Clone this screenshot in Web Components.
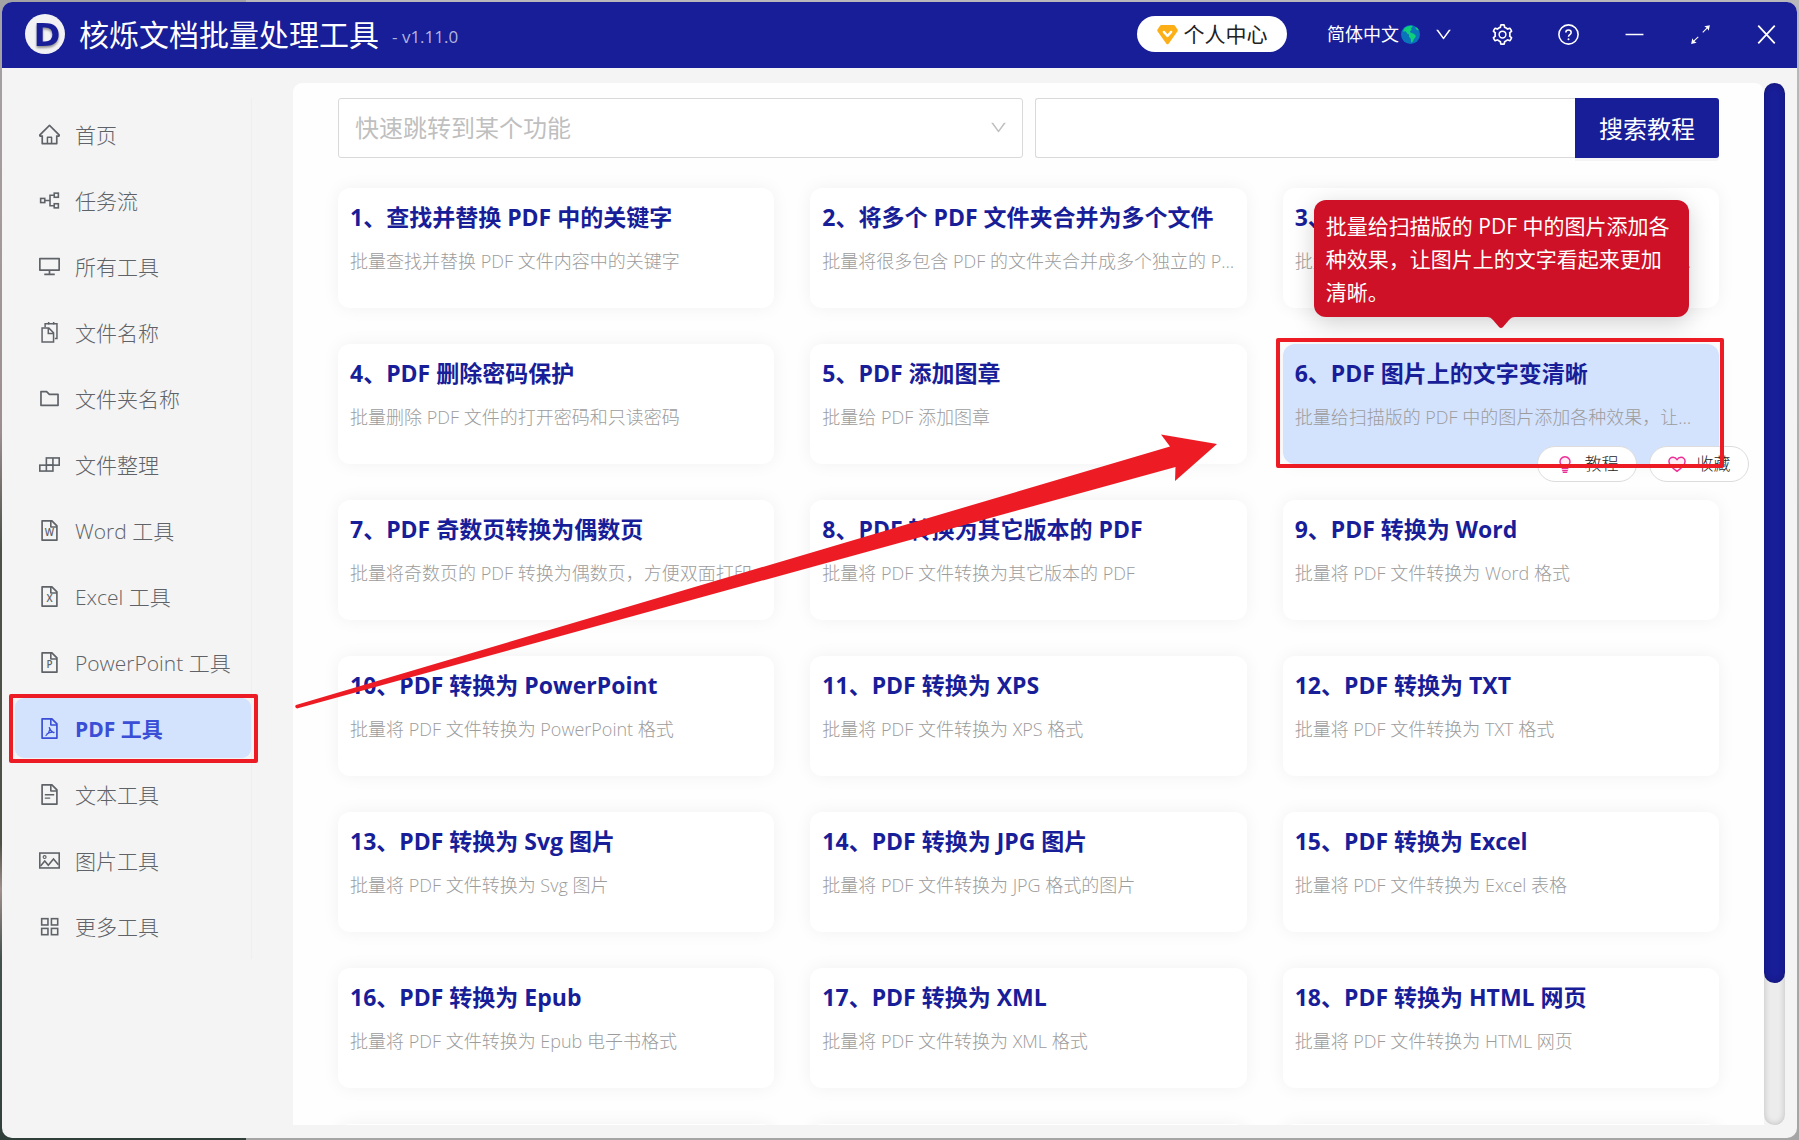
<!DOCTYPE html>
<html lang="zh-CN">
<head>
<meta charset="utf-8">
<title>核烁文档批量处理工具</title>
<style>
  :root {
    --brand: #181d98;
    --surface: #f4f4f4;
    --panel: #fefefe;
    --ink: #5f6368;
    --muted: #9c9c9c;
    --active: #3a4fd6;
    --active-bg: #d3e2fd;
    --mark: #ed1c24;
  }
  html, body { height: 100%; }
  body {
    margin: 0;
    overflow: hidden;
    font-family: "Open Sans", "Noto Sans CJK SC", sans-serif;
    color: var(--ink);
    background:
      linear-gradient(#a3a3a5, #a59a9c 18%, #9c8d90 38%, #4b5147 48%, #4d5045 74%, #a18f8c 78%, #44524e 84%, #2f403b) left / 246px 100% no-repeat,
      linear-gradient(#b9b9bb, #a5a5a5);
  }
</style>
</head>
<body>
<app-window></app-window>

<script>
const FILE = '<path d="M854.6 288.6L639.4 73.4c-6-6-14.1-9.4-22.6-9.4H192c-17.7 0-32 14.3-32 32v832c0 17.7 14.3 32 32 32h640c17.7 0 32-14.3 32-32V311.3c0-8.5-3.4-16.7-9.4-22.7zM790.2 326H602V137.8L790.2 326zm1.8 562H232V136h302v216a42 42 0 0 0 42 42h216v494z"/>';
const letter = c => FILE + `<text x="512" y="760" text-anchor="middle" font-size="420" font-weight="600" font-family="Open Sans, sans-serif">${c}</text>`;
const line = (body, w = 68) => `<g fill="none" stroke="currentColor" stroke-width="${w}">${body}</g>`;

const ICONS = {
  home: '<path d="M946.5 505L534.6 93.4a31.93 31.93 0 0 0-45.2 0L77.5 505c-12 12-18.8 28.3-18.8 45.3 0 35.3 28.7 64 64 64h43.400V908c0 17.700 14.300 32 32 32H825.900c17.700 0 32-14.300 32-32V614.300h43.400c17 0 33.300-6.700 45.300-18.800 24.900-25 24.900-65.500-.1-90.500zM568 868H456V664h112v204zm217.900 0H632V632c0-22.100-17.900-40-40-40H432c-22.100 0-40 17.900-40 40v236H238.100V542.300h-96l370-369.700 370 369.700h-96.200V868z"/>',
  flow: line('<rect x="134" y="424" width="176" height="176"/><rect x="714" y="198" width="176" height="176"/><rect x="714" y="650" width="176" height="176"/><path d="M310 512h190M714 286H534v452h180"/>'),
  desktop: '<path d="M928 140H96c-17.7 0-32 14.3-32 32v496c0 17.7 14.3 32 32 32h380v112H304c-8.8 0-16 7.2-16 16v48c0 4.4 3.6 8 8 8h432c4.4 0 8-3.6 8-8v-48c0-8.800-7.200-16-16-16H548V700h380c17.700 0 32-14.300 32-32V172c0-17.700-14.300-32-32-32zm-40 488H136V212h752v416z"/>',
  copy: line('<path d="M195 325h290l200 200v390H195zM460 325v225h225"/><path d="M325 290V136h505v634h-90M476 64v120M690 64v120"/>', 64),
  folder: '<path d="M880 298.4H521L403.700 186.200a8.150 8.150 0 0 0-5.500-2.200H144c-17.700 0-32 14.300-32 32v592c0 17.700 14.300 32 32 32h736c17.700 0 32-14.300 32-32V330.400c0-17.700-14.300-32-32-32zM840 768H184V256h188.500l119.600 114.400H840V768z"/>',
  blocks: line('<rect x="98" y="540" width="560" height="252"/><rect x="378" y="232" width="548" height="308"/><path d="M378 540v252M658 232v308"/>'),
  word: letter('W'),
  excel: letter('X'),
  ppt: letter('P'),
  pdf: FILE + '<path d="M502 470c22 90 44 150 190 222M522 560c-20 110-70 190-160 250M400 745c80-60 190-92 310-72" fill="none" stroke="currentColor" stroke-width="52" stroke-linecap="round"/>',
  text: FILE + '<path d="M312 520h400M312 668h230" fill="none" stroke="currentColor" stroke-width="60"/>',
  image: line('<rect x="98" y="194" width="828" height="636"/><path d="M130 746l180-214 150 178 222-264 210 250"/><circle cx="304" cy="366" r="62" stroke-width="50"/>'),
  grid: line('<rect x="178" y="178" width="268" height="268"/><rect x="594" y="178" width="268" height="268"/><rect x="178" y="594" width="268" height="268"/><rect x="594" y="594" width="268" height="268"/>'),
  down: '<path d="M884 256h-75c-5.100 0-9.900 2.500-12.900 6.600L512 654.200 227.900 262.600c-3-4.100-7.800-6.600-12.900-6.600h-75c-6.500 0-10.300 7.400-6.500 12.700l352.600 486.100c12.800 17.600 39 17.600 51.700 0l352.600-486.100c3.900-5.300.1-12.700-6.400-12.700z"/>',
  gear: '<path d="M924.8 625.7l-65.5-56c3.1-19 4.7-38.4 4.7-57.8s-1.6-38.8-4.7-57.8l65.5-56a32.03 32.03 0 0 0 9.3-35.2l-.9-2.6a443.74 443.74 0 0 0-79.700-137.900l-1.800-2.100a32.120 32.120 0 0 0-35.100-9.500l-81.300 28.900c-30-24.600-63.500-44-99.700-57.600l-15.700-85a32.050 32.050 0 0 0-25.800-25.700l-2.700-.5c-52.100-9.400-106.900-9.400-159 0l-2.700.5a32.050 32.050 0 0 0-25.800 25.700l-15.800 85.400a351.860 351.860 0 0 0-99 57.400l-81.900-29.100a32 32 0 0 0-35.100 9.500l-1.800 2.100a446.020 446.020 0 0 0-79.700 137.900l-.9 2.600c-4.500 12.500-.8 26.500 9.300 35.200l66.300 56.600c-3.100 18.800-4.600 38-4.600 57.100 0 19.200 1.500 38.400 4.600 57.100L99 625.500a32.030 32.030 0 0 0-9.300 35.200l.9 2.600c18.100 50.400 44.900 96.900 79.700 137.900l1.800 2.100a32.120 32.120 0 0 0 35.100 9.500l81.900-29.100c29.800 24.500 63.100 43.900 99 57.400l15.800 85.400a32.050 32.050 0 0 0 25.800 25.700l2.700.5a449.400 449.400 0 0 0 159 0l2.700-.5a32.050 32.050 0 0 0 25.800-25.700l15.700-85a350 350 0 0 0 99.700-57.600l81.300 28.900a32 32 0 0 0 35.100-9.500l1.800-2.100c34.800-41.100 61.600-87.500 79.700-137.900l.9-2.600c4.500-12.300.8-26.300-9.300-35zM788.300 465.900c2.500 15.100 3.800 30.600 3.800 46.100s-1.300 31-3.800 46.100l-6.600 40.100 74.700 63.900a370.030 370.030 0 0 1-42.600 73.600L721 702.800l-31.400 25.800c-23.900 19.600-50.500 35-79.300 45.800l-38.100 14.300-17.900 97a377.500 377.500 0 0 1-85 0l-17.900-97.200-37.800-14.500c-28.500-10.800-55-26.200-78.700-45.700l-31.400-25.900-93.400 33.200c-17-22.900-31.200-47.600-42.600-73.600l75.500-64.500-6.500-40c-2.400-14.900-3.700-30.300-3.700-45.500 0-15.300 1.200-30.600 3.700-45.500l6.500-40-75.500-64.500c11.300-26.100 25.600-50.700 42.600-73.600l93.400 33.200 31.400-25.900c23.700-19.500 50.200-34.900 78.700-45.700l37.900-14.300 17.900-97.200c28.100-3.200 56.800-3.200 85 0l17.900 97 38.100 14.300c28.700 10.800 55.400 26.200 79.300 45.800l31.400 25.800 92.800-32.900c17 22.900 31.200 47.600 42.600 73.600L781.800 426l6.500 39.900z"/><circle cx="512" cy="512" r="144" fill="none" stroke="currentColor" stroke-width="64"/>',
  help: line('<circle cx="512" cy="512" r="410"/><path d="M398 428c0-62 50-106 114-106s114 44 114 102c0 92-114 86-114 182" stroke-width="66"/>') + '<circle cx="512" cy="718" r="42"/>',
  minus: line('<path d="M130 512h764"/>', 66),
  expand: '<path d="M592 400l180-180-96-56 236-52-52 236-56-96-180 180zM432 624L252 804l96 56-236 52 52-236 56 96 180-180z"/>',
  close: line('<path d="M160 130l704 764M864 130L160 894"/>', 76),
  diamond: '<path d="M250 110h524c24 0 44 10 58 30l112 170c14 22 12 46-4 66L560 905c-26 32-70 32-96 0L84 376c-16-20-18-44-4-66l112-170c14-20 34-30 58-30z" fill="#fcaf17"/><path d="M356 400l156 176 156-176" fill="none" stroke="#fff" stroke-width="100" stroke-linecap="round" stroke-linejoin="round"/>',
  globe: '<circle cx="512" cy="512" r="448" fill="#0a74bb"/><path d="M250 190c110-80 250-110 360-90 20 60-60 90-90 130 60 10 50 70 10 90-40 30-60 60-30 90 20 30 60 20 90 40 70 10 150 60 170 130 0 80-60 100-90 160-30 60-50 130-110 160-40-60-20-140-50-210-60-40-90-110-60-180-60-20-110-50-130-110-20-60-70-50-150-20 0-70 30-130 80-190z" fill="#0fd07a"/><path d="M760 170c60 20 110 70 140 130-50 30-90 0-120-30-30-30-50-70-20-100z" fill="#0fd07a"/>',
  bulb: '<path d="M380 740V610a250 250 0 1 1 264 0v130z" fill="#ffeef6" stroke="#eb2f96" stroke-width="72"/><path d="M372 842h280M400 926h224" stroke="#eb2f96" stroke-width="60"/>',
  heart: '<path d="M512 880C330 750 110 590 110 390c0-120 90-214 204-214 84 0 156 46 198 124 42-78 114-124 198-124 114 0 204 94 204 214 0 200-220 360-402 490z" fill="#ffeef6" stroke="#eb2f96" stroke-width="72" stroke-linejoin="round"/>'
};

const define = (name, html, setup) => {
  const tpl = document.createElement('template');
  tpl.innerHTML = html;
  customElements.define(name, class extends HTMLElement {
    constructor() {
      super();
      this.attachShadow({ mode: 'open' }).append(tpl.content.cloneNode(true));
    }
    connectedCallback() { if (setup) setup(this, this.shadowRoot); }
  });
};

define('ui-icon', `
<style>
  :host { display: inline-flex; flex: none; width: var(--size, 21px); height: var(--size, 21px); }
  svg { width: 100%; height: 100%; fill: currentColor; }
</style>
<svg viewBox="64 64 896 896" aria-hidden="true"></svg>`,
(el, root) => { root.querySelector('svg').innerHTML = ICONS[el.getAttribute('name')]; });

define('mark-frame', `
<style>
  :host { display: block; position: absolute; z-index: 5; box-sizing: border-box; border: 4px solid var(--mark); border-radius: 2px; pointer-events: none; }
</style>`);

define('mark-arrow', `
<style>
  :host { display: block; position: absolute; z-index: 4; top: 0; left: 0; pointer-events: none; }
  svg { display: block; }
</style>
<svg width="940" height="640" viewBox="0 0 940 640" aria-hidden="true">
  <path d="M3 622L877 363.500 868 351.500 924 361 882 398 882.500 384 4 625.500Q1 624 3 622z" fill="#ed1c24"/>
</svg>`);

define('app-logo', `
<style>
  :host { display: block; width: 41px; height: 41px; }
  svg { display: block; }
</style>
<svg width="41" height="41" viewBox="0 0 41 41" role="img" aria-label="logo">
  <circle cx="20" cy="20" r="20" fill="#f2f2f4"/>
  <text x="22" y="32" text-anchor="middle" font-family="DejaVu Sans" font-weight="700" font-size="32" fill="#181d98" style="filter: drop-shadow(0 2px 1px rgba(0,0,0,.4))">D</text>
</svg>`);

define('title-bar', `
<style>
  :host { display: flex; align-items: center; flex: none; box-sizing: border-box; height: 66px; padding: 0 20px 2px 23px; background: var(--brand); color: #fff; }
  h1 { margin: 2px 0 0 13px; font-size: 30px; line-height: 44px; font-weight: 400; }
  .version { margin: 5px auto 0 13px; font-size: 17px; line-height: 24px; color: #b2b4dd; }
  button { display: flex; align-items: center; justify-content: center; border: 0; padding: 0; background: none; color: inherit; font: inherit; }
  .user { width: 150px; height: 36px; gap: 6px; border-radius: 18px; background: #fff; color: #222; font-size: 21px; line-height: 30px; }
  .lang { margin: 0 40px; font-size: 18px; line-height: 28px; }
  .lang ui-icon:first-of-type { --size: 19px; margin: 0 15px 0 2px; }
  .lang ui-icon:last-of-type { --size: 17px; }
  .tools { display: flex; gap: 45px; }
</style>
<app-logo></app-logo>
<h1>核烁文档批量处理工具</h1>
<span class="version">- v1.11.0</span>
<button class="user"><ui-icon name="diamond"></ui-icon>个人中心</button>
<button class="lang">简体中文<ui-icon name="globe"></ui-icon><ui-icon name="down"></ui-icon></button>
<div class="tools">
  <button aria-label="设置"><ui-icon name="gear"></ui-icon></button>
  <button aria-label="帮助"><ui-icon name="help"></ui-icon></button>
  <button aria-label="最小化"><ui-icon name="minus"></ui-icon></button>
  <button aria-label="最大化"><ui-icon name="expand"></ui-icon></button>
  <button aria-label="关闭"><ui-icon name="close"></ui-icon></button>
</div>`);

define('nav-item', `
<style>
  :host { display: block; position: relative; }
  a { display: flex; align-items: center; gap: 15px; height: 60px; padding-left: 24px; border-radius: 9px; font-size: 21px; line-height: 30px; font-weight: 300; color: var(--ink); text-decoration: none; white-space: nowrap; }
  span { padding-top: 2px; }
  :host([active]) a { background: var(--active-bg); color: var(--active); font-weight: 700; }
  mark-frame { display: none; }
  :host([active]) mark-frame { display: block; inset: -4px -7px -5px -6px; }
</style>
<a href="#"><ui-icon></ui-icon><span><slot></slot></span></a><mark-frame></mark-frame>`,
(el, root) => {
  const icon = document.createElement('ui-icon');
  icon.setAttribute('name', el.getAttribute('icon'));
  root.querySelector('ui-icon').replaceWith(icon);
});

define('side-nav', `
<style>
  :host { display: flex; flex: none; flex-direction: column; align-self: flex-start; box-sizing: border-box; gap: 6px; width: 250px; margin: 30px 41px 0 0; padding: 6px 0 3px 13px; border-right: 1px solid #efefef; }
</style>
<slot></slot>`);

define('search-bar', `
<style>
  :host { display: flex; gap: 12px; }
  .jump, form { position: relative; display: flex; flex: 1 1 0; min-width: 0; height: 60px; }
  select, input { box-sizing: border-box; width: 100%; min-width: 0; border: 1px solid #d9d9d9; border-radius: 3px; background: #fff; font: inherit; font-size: 24px; padding: 0 16px 2px; outline: 0; }
  select { appearance: none; color: #bfbfbf; }
  .jump ui-icon { position: absolute; right: 16px; top: 21px; --size: 17px; color: #bfbfbf; pointer-events: none; }
  input { flex: 1; border-right: 0; border-radius: 3px 0 0 3px; }
  button { flex: none; width: 144px; padding: 0 0 2px; border: 0; border-radius: 0 3px 3px 0; background: var(--brand); color: #fff; font: inherit; font-size: 24px; box-shadow: 0 3px 0 rgba(0,0,0,.04); }
</style>
<div class="jump">
  <select aria-label="快速跳转到某个功能"><option>快速跳转到某个功能</option></select>
  <ui-icon name="down"></ui-icon>
</div>
<form><input type="text" aria-label="搜索教程"><button type="button">搜索教程</button></form>`);

define('hint-bubble', `
<style>
  :host { display: block; position: absolute; z-index: 6; left: 50%; bottom: 27px; width: 375px; box-sizing: border-box; margin-left: -187px; padding: 10px 12px 8px; border-radius: 12px; background: #ce1126; color: #fff; font-size: 21px; line-height: 33px; box-shadow: 0 6px 24px rgba(0,0,0,.18); }
  svg { position: absolute; left: 50%; top: 100%; margin-left: -14px; }
</style>
<slot></slot>
<svg width="28" height="11" viewBox="0 0 28 11" aria-hidden="true"><path d="M0 0h28c-3 0-4 1-6 3l-6 7q-2 2-4 0L6 3C4 1 3 0 0 0z" fill="#ce1126"/></svg>`);

define('pill-button', `
<style>
  :host { display: block; }
  button { display: flex; align-items: center; justify-content: center; gap: 11px; box-sizing: border-box; width: 100px; height: 36px; border: 1px solid #dcdcdc; border-radius: 18px; padding: 0; background: #fff; color: #262626; font: inherit; font-weight: 300; font-size: 17px; line-height: 24px; --size: 18px; }
</style>
<button><ui-icon></ui-icon><slot></slot></button>`,
(el, root) => {
  const icon = document.createElement('ui-icon');
  icon.setAttribute('name', el.getAttribute('icon'));
  root.querySelector('ui-icon').replaceWith(icon);
});

define('tool-card', `
<style>
  :host { display: block; position: relative; box-sizing: border-box; height: 120px; min-width: 0; padding: 11px 12px; border-radius: 12px; background: #fff; box-shadow: 0 0 18px rgba(0,0,0,.055); }
  :host([active]) { background: var(--active-bg); }
  h2, p { margin: 0; white-space: nowrap; overflow: hidden; text-overflow: ellipsis; }
  h2 { font-size: 23px; line-height: 36px; font-weight: 700; color: var(--brand); }
  p { margin-top: 12px; font-size: 18px; line-height: 28px; font-weight: 300; color: var(--muted); }
  .anchor { position: absolute; left: 0; right: 0; top: 0; }
  .actions { position: absolute; z-index: 3; right: -30px; bottom: -18px; display: flex; gap: 12px; }
  mark-frame { inset: -6px -5px -4px -7px; }
  :host(:not([active])) :is(mark-frame, .actions) { display: none; }
</style>
<h2><slot name="title"></slot></h2>
<p><slot></slot></p>
<div class="actions"><slot name="actions"></slot></div>
<mark-frame></mark-frame>
<div class="anchor"><slot name="hint"></slot></div>`);

define('scroll-rail', `
<style>
  :host { display: block; flex: none; width: 21px; margin: 15px 12px 13px 0; border-radius: 11px; background: #ececec; box-shadow: inset 0 0 6px rgba(0,0,0,.2); }
  div { height: 86.4%; border-radius: 11px; background: var(--brand); box-shadow: inset 0 0 6px rgba(0,0,0,.25); }
</style>
<div></div>`);

define('tool-panel', `
<style>
  :host { display: block; position: relative; flex: 1; min-width: 0; box-sizing: border-box; margin: 15px 0 13px; padding: 15px 45px 0; border-radius: 9px 9px 0 0; background: var(--panel); overflow: hidden; }
  .grid { display: grid; grid-template-columns: repeat(3, minmax(0, 1fr)); gap: 36px; margin-top: 30px; }
</style>
<search-bar></search-bar>
<div class="grid"><slot></slot></div>
<mark-arrow></mark-arrow>`,
el => {
  TOOLS.forEach(([title, text], i) => {
    const card = document.createElement('tool-card');
    card.innerHTML = `<span slot="title">${i + 1}、${title}</span>${text}`;
    if (i === 5) {
      card.setAttribute('active', '');
      card.innerHTML += `<pill-button slot="actions" icon="bulb">教程</pill-button><pill-button slot="actions" icon="heart">收藏</pill-button><hint-bubble slot="hint">${text}</hint-bubble>`;
    }
    el.append(card);
  });
  for (let i = 0; i < 3; i++) el.append(document.createElement('tool-card'));
});

const TOOLS = [
  ['查找并替换 PDF 中的关键字', '批量查找并替换 PDF 文件内容中的关键字'],
  ['将多个 PDF 文件夹合并为多个文件', '批量将很多包含 PDF 的文件夹合并成多个独立的 PDF 文件'],
  ['', '批量将多个文件夹中的 PDF 文件合并成为一个独立的 PDF 文件'],
  ['PDF 删除密码保护', '批量删除 PDF 文件的打开密码和只读密码'],
  ['PDF 添加图章', '批量给 PDF 添加图章'],
  ['PDF 图片上的文字变清晰', '批量给扫描版的 PDF 中的图片添加各种效果，让图片上的文字看起来更加清晰。'],
  ['PDF 奇数页转换为偶数页', '批量将奇数页的 PDF 转换为偶数页，方便双面打印'],
  ['PDF 转换为其它版本的 PDF', '批量将 PDF 文件转换为其它版本的 PDF'],
  ['PDF 转换为 Word', '批量将 PDF 文件转换为 Word 格式'],
  ['PDF 转换为 PowerPoint', '批量将 PDF 文件转换为 PowerPoint 格式'],
  ['PDF 转换为 XPS', '批量将 PDF 文件转换为 XPS 格式'],
  ['PDF 转换为 TXT', '批量将 PDF 文件转换为 TXT 格式'],
  ['PDF 转换为 Svg 图片', '批量将 PDF 文件转换为 Svg 图片'],
  ['PDF 转换为 JPG 图片', '批量将 PDF 文件转换为 JPG 格式的图片'],
  ['PDF 转换为 Excel', '批量将 PDF 文件转换为 Excel 表格'],
  ['PDF 转换为 Epub', '批量将 PDF 文件转换为 Epub 电子书格式'],
  ['PDF 转换为 XML', '批量将 PDF 文件转换为 XML 格式'],
  ['PDF 转换为 HTML 网页', '批量将 PDF 文件转换为 HTML 网页']
];

define('app-window', `
<style>
  :host { display: flex; height: 100%; box-sizing: border-box; padding: 2px; }
  .frame { display: flex; flex: 1; flex-direction: column; min-width: 0; border-radius: 10px; background: var(--surface); overflow: hidden; }
  main { display: flex; flex: 1; min-height: 0; }
</style>
<div class="frame">
  <title-bar></title-bar>
  <main>
    <side-nav>
      <nav-item icon="home">首页</nav-item>
      <nav-item icon="flow">任务流</nav-item>
      <nav-item icon="desktop">所有工具</nav-item>
      <nav-item icon="copy">文件名称</nav-item>
      <nav-item icon="folder">文件夹名称</nav-item>
      <nav-item icon="blocks">文件整理</nav-item>
      <nav-item icon="word">Word 工具</nav-item>
      <nav-item icon="excel">Excel 工具</nav-item>
      <nav-item icon="ppt">PowerPoint 工具</nav-item>
      <nav-item icon="pdf" active>PDF 工具</nav-item>
      <nav-item icon="text">文本工具</nav-item>
      <nav-item icon="image">图片工具</nav-item>
      <nav-item icon="grid">更多工具</nav-item>
    </side-nav>
    <tool-panel></tool-panel>
    <scroll-rail></scroll-rail>
  </main>
</div>`);
</script>
</body>
</html>
